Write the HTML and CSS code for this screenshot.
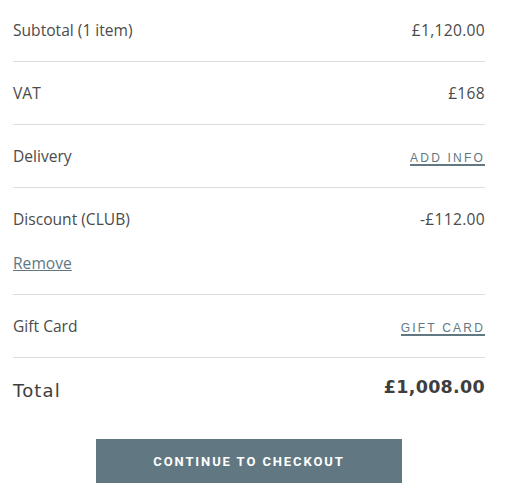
FILE: index.html
```html
<!DOCTYPE html>
<html>
<head>
<meta charset="utf-8">
<link rel="stylesheet" href="styles.css">
</head>
<body>
<div class="summary">
  <div class="row">
    <span class="label">Subtotal (1 item)</span>
    <span class="value">£1,120.00</span>
  </div>
  <div class="row">
    <span class="label">VAT</span>
    <span class="value">£168</span>
  </div>
  <div class="row">
    <span class="label">Delivery</span>
    <a class="caps-link" href="#">ADD INFO</a>
  </div>
  <div class="row discount">
    <div class="line">
      <span class="label">Discount (CLUB)</span>
      <span class="value">-£112.00</span>
    </div>
    <a class="remove" href="#">Remove</a>
  </div>
  <div class="row">
    <span class="label">Gift Card</span>
    <a class="caps-link" href="#">GIFT CARD</a>
  </div>
  <div class="total">
    <span class="total-label">Total</span>
    <span class="total-value">£1,008.00</span>
  </div>
  <div class="actions">
    <button class="checkout">CONTINUE TO CHECKOUT</button>
  </div>
</div>
</body>
</html>
```
FILE: styles.css
```css
body {
  margin: 0;
  background: #fff;
  font-family: "Open Sans", "Noto Sans", sans-serif;
  color: #4b4b4b;
}
.summary {
  width: 472px;
  padding-left: 13px;
  margin-top: -1px;
}
.row {
  display: flex;
  justify-content: space-between;
  align-items: center;
  height: 62px;
  border-bottom: 1px solid #dcdcdc;
  font-size: 15.6px;
}
.row.discount {
  display: block;
  height: auto;
  padding: 20px 0 20px;
}
.line {
  display: flex;
  justify-content: space-between;
  line-height: 22px;
}
.remove {
  display: inline-block;
  margin-top: 22px;
  color: #617882;
  font-size: 15.6px;
  line-height: 22px;
}
.label, .value {
  line-height: 22px;
}
.value {
  letter-spacing: 0.3px;
}
.caps-link {
  font-family: "Liberation Sans", Arial, sans-serif;
  font-size: 12px;
  letter-spacing: 2.2px;
  color: #617882;
  text-decoration: none;
  border-bottom: 2px solid #617882;
  line-height: 12px;
  margin-top: 5px;
  margin-right: 0;
}
.total {
  display: flex;
  justify-content: space-between;
  align-items: center;
  height: 58px;
}
.total-label {
  font-family: "DejaVu Sans", sans-serif;
  font-size: 18px;
  letter-spacing: 1.2px;
  color: #3e3e3e;
  padding-top: 6px;
}
.total-value {
  font-family: "DejaVu Sans", sans-serif;
  font-size: 17.5px;
  font-weight: bold;
  letter-spacing: 0.3px;
  color: #3e3e3e;
}
.actions {
  display: flex;
  justify-content: center;
  padding-top: 23px;
}
.checkout {
  width: 306px;
  height: 44px;
  background: #617882;
  border: none;
  color: #fff;
  font-family: Roboto, "Liberation Sans", sans-serif;
  font-size: 13px;
  font-weight: bold;
  letter-spacing: 1.9px;
}
```
